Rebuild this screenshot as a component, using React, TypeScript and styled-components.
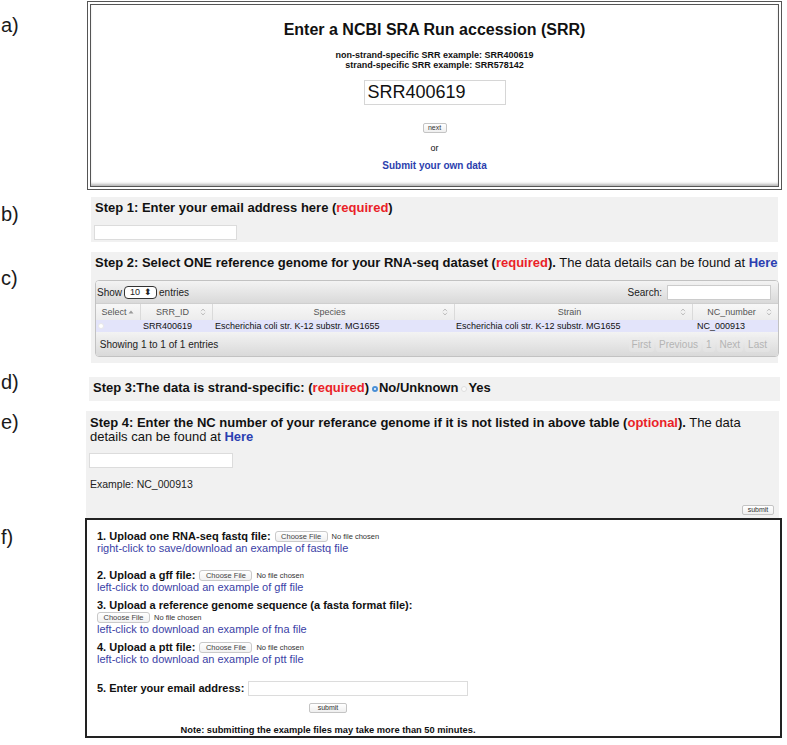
import React from "react";
import styled, { createGlobalStyle } from "styled-components";

const Global = createGlobalStyle`
  html, body { margin: 0; padding: 0; background: #fff; }
  body { font-family: "Liberation Sans", Arial, sans-serif; color: #111; }
`;

const Page = styled.div`
  width: 787px;
  padding-top: 1px;
  display: flex;
  flex-direction: column;
`;

const Row = styled.div<{ $gap: number }>`
  display: flex;
  align-items: flex-start;
  margin-top: ${(p) => p.$gap}px;
`;

const Label = styled.div<{ $top: number }>`
  width: 84px;
  flex: none;
  padding-left: 1px;
  margin-top: ${(p) => p.$top}px;
  font-size: 20px;
  line-height: 20px;
  color: #1a1a1a;
`;

/* ---------- a) ---------- */
const AccessionBox = styled.section`
  margin-left: 2px;
  width: 695px;
  height: 189px;
  box-sizing: border-box;
  border: 4px double #555;
  box-shadow: inset 0 -3px 3px -1px #b5b5b5;
  padding-top: 16px;
  display: flex;
  flex-direction: column;
  align-items: center;
  text-align: center;
`;

const Title = styled.h1`
  margin: 0;
  font-size: 16px;
  line-height: 18px;
  font-weight: bold;
`;

const Examples = styled.div`
  margin-top: 11px;
  font-size: 9px;
  line-height: 10px;
  font-weight: bold;
`;

const SrrInput = styled.input`
  margin-top: 10px;
  width: 142px;
  height: 25px;
  box-sizing: border-box;
  border: 1px solid #d6d6d6;
  padding: 0 3px;
  font-family: "Liberation Sans", Arial, sans-serif;
  font-size: 18px;
  color: #111;
  outline: none;
`;

const TinyButton = styled.button<{ $mt?: number; $w?: number }>`
  margin-top: ${(p) => p.$mt ?? 0}px;
  height: 10px;
  min-width: ${(p) => p.$w ?? 0}px;
  box-sizing: border-box;
  padding: 0 3px;
  border: 1px solid #c4c4c4;
  border-radius: 2px;
  background: linear-gradient(#ffffff, #efefef);
  font-family: "Liberation Sans", Arial, sans-serif;
  font-size: 7px;
  line-height: 8px;
  color: #333;
`;

const OrText = styled.div`
  margin-top: 10px;
  font-size: 9px;
  line-height: 10px;
`;

const SubmitOwn = styled.a`
  margin-top: 7px;
  font-size: 10px;
  line-height: 11px;
  font-weight: bold;
  color: #2c3fae;
  text-decoration: none;
`;

/* ---------- shared grey steps ---------- */
const GreyPanel = styled.section<{ $ml: number; $w: number; $h: number; $pt: number }>`
  margin-left: ${(p) => p.$ml}px;
  width: ${(p) => p.$w}px;
  height: ${(p) => p.$h}px;
  box-sizing: border-box;
  padding-top: ${(p) => p.$pt}px;
  background: #f1f1f1;
  display: flex;
  flex-direction: column;
  align-items: flex-start;
`;

const StepTitle = styled.div<{ $pl: number; $wrap?: boolean }>`
  padding-left: ${(p) => p.$pl}px;
  font-size: 13px;
  line-height: ${(p) => (p.$wrap ? 14 : 15)}px;
  font-weight: bold;
  white-space: ${(p) => (p.$wrap ? "normal" : "nowrap")};
  color: #111;
`;

const Red = styled.span`
  color: #ea1f28;
`;

const Normal = styled.span`
  font-weight: normal;
`;

const Here = styled.a`
  color: #2b3fb1;
  font-weight: bold;
  text-decoration: none;
`;

const TextField = styled.input<{ $mt: number; $ml: number; $w: number }>`
  margin: ${(p) => p.$mt}px 0 0 ${(p) => p.$ml}px;
  width: ${(p) => p.$w}px;
  height: 15px;
  box-sizing: border-box;
  border: 1px solid #dcdcdc;
  background: #fff;
  outline: none;
`;

/* ---------- c) table ---------- */
const Table = styled.div`
  margin: 10px 0 0 4px;
  width: 682px;
  border: 1px solid #c2c2c2;
  border-radius: 4px;
  overflow: hidden;
  background: #fff;
  font-size: 10px;
  color: #222;
`;

const Bar = styled.div<{ $h: number }>`
  height: ${(p) => p.$h}px;
  display: flex;
  align-items: center;
  justify-content: space-between;
  padding: 0 7px 0 1px;
  background: linear-gradient(#f3f3f3, #d9d9d9);
`;

const Inline = styled.div`
  display: flex;
  align-items: center;
  gap: 2px;
`;

const LenSelect = styled.span`
  display: inline-flex;
  align-items: center;
  justify-content: space-between;
  width: 33px;
  height: 13px;
  box-sizing: border-box;
  border: 1px solid #333;
  border-radius: 4px;
  background: #fff;
  padding: 0 4px 0 5px;
  font-size: 9px;
`;

const SearchBox = styled.input`
  width: 104px;
  height: 15px;
  box-sizing: border-box;
  border: 1px solid #ccc;
  background: #fff;
  margin-left: 3px;
  outline: none;
`;

const Cols = "45px 72px 242px 238px 1fr";

const HeadRow = styled.div`
  display: grid;
  grid-template-columns: ${Cols};
  height: 17px;
  background: linear-gradient(#f7f7f7, #ececec);
  border-top: 1px solid #cfcfcf;
  box-sizing: border-box;
`;

const HeadCell = styled.div`
  display: flex;
  align-items: center;
  padding: 0 6px 0 4px;
  border-right: 1px solid #dadada;
  color: #555;
  font-size: 9px;
  &:last-child { border-right: none; }
`;

const HeadText = styled.span`
  flex: 1;
  text-align: center;
`;

const DataRow = styled.div`
  display: grid;
  grid-template-columns: ${Cols};
  height: 12px;
  background: #e3e4fa;
  font-size: 9px;
  line-height: 12px;
  color: #111;
`;

const DataCell = styled.div<{ $pl: number }>`
  padding-left: ${(p) => p.$pl}px;
  white-space: nowrap;
  display: flex;
  align-items: center;
`;

const RowRadio = styled.span`
  width: 6px;
  height: 6px;
  border-radius: 50%;
  background: #fff;
  border: 1px solid #e8e8e8;
  box-sizing: border-box;
`;

const Pager = styled.div`
  display: flex;
  align-items: center;
  gap: 2px;
  margin-right: 1px;
`;

const PageBtn = styled.span`
  padding: 2px 3px;
  border-radius: 3px;
  background: linear-gradient(#ececec, #e2e2e2);
  color: #b4b4b4;
  font-size: 10px;
  line-height: 11px;
`;

const SortIcon = ({ active }: { active?: boolean }) =>
  active ? (
    <svg width="6" height="6" viewBox="0 0 6 6">
      <path d="M0.5 4.5 L3 1.5 L5.5 4.5 Z" fill="#9a9a9a" />
    </svg>
  ) : (
    <svg width="6" height="8" viewBox="0 0 6 8">
      <path d="M1 3.2 L3 1 L5 3.2 M1 4.8 L3 7 L5 4.8" fill="none" stroke="#b9b9b9" strokeWidth="0.9" />
    </svg>
  );

/* ---------- d) radios ---------- */
const Radio = styled.span<{ $on?: boolean }>`
  display: inline-block;
  width: 6px;
  height: 6px;
  margin: 0 1px 0 3px;
  border-radius: 50%;
  box-sizing: border-box;
  vertical-align: baseline;
  background: ${(p) => (p.$on ? "#fff" : "#fafafa")};
  border: ${(p) => (p.$on ? "2px solid #4a8fd6" : "1px solid #dedede")};
`;

/* ---------- e) ---------- */
const ExampleText = styled.div`
  margin: 10px 0 0 4px;
  font-size: 10.5px;
  line-height: 12px;
  color: #222;
`;

const RightSlot = styled.div`
  align-self: flex-end;
  margin: 8px 5px 0 0;
`;

/* ---------- f) ---------- */
const UploadBox = styled.section`
  width: 697px;
  height: 220px;
  box-sizing: border-box;
  border: 2px solid #222;
  padding: 10px 0 0 10px;
`;

const UploadInner = styled.div`
  width: 462px;
  display: flex;
  flex-direction: column;
  align-items: flex-start;
`;

const Line = styled.div<{ $mt?: number }>`
  margin-top: ${(p) => p.$mt ?? 0}px;
  height: 12px;
  display: flex;
  align-items: center;
  white-space: nowrap;
`;

const Strong = styled.span`
  font-size: 11px;
  font-weight: bold;
  color: #111;
`;

const FileLink = styled.a`
  font-size: 11px;
  line-height: 12px;
  color: #3b3fa6;
  text-decoration: none;
  white-space: nowrap;
`;

const ChooseBtn = styled.span<{ $ml?: number }>`
  margin-left: ${(p) => p.$ml ?? 4}px;
  width: 53px;
  height: 11px;
  box-sizing: border-box;
  border: 1px solid #c9c9c9;
  border-radius: 3px;
  background: linear-gradient(#ffffff, #f1f1f1);
  font-size: 7.5px;
  line-height: 9px;
  text-align: center;
  color: #444;
`;

const NoFile = styled.span`
  margin-left: 4px;
  font-size: 7.5px;
  color: #333;
`;

const Centered = styled.div<{ $mt: number }>`
  align-self: stretch;
  margin-top: ${(p) => p.$mt}px;
  display: flex;
  justify-content: center;
`;

const Note = styled.div`
  font-size: 9.3px;
  line-height: 10px;
  font-weight: bold;
  white-space: nowrap;
`;

const FileControl = ({ ml }: { ml?: number }) => (
  <>
    <ChooseBtn $ml={ml}>Choose File</ChooseBtn>
    <NoFile>No file chosen</NoFile>
  </>
);

export default function App() {
  return (
    <>
      <Global />
      <Page>
        <Row $gap={0}>
          <Label $top={14}>a)</Label>
          <AccessionBox>
            <Title>Enter a NCBI SRA Run accession (SRR)</Title>
            <Examples>
              non-strand-specific SRR example: SRR400619
              <br />
              strand-specific SRR example: SRR578142
            </Examples>
            <SrrInput defaultValue="SRR400619" readOnly />
            <TinyButton $mt={18} $w={24}>next</TinyButton>
            <OrText>or</OrText>
            <SubmitOwn href="#">Submit your own data</SubmitOwn>
          </AccessionBox>
        </Row>

        <Row $gap={7}>
          <Label $top={7}>b)</Label>
          <GreyPanel $ml={6} $w={687} $h={45} $pt={3}>
            <StepTitle $pl={4}>
              Step 1: Enter your email address here (<Red>required</Red>)
            </StepTitle>
            <TextField $mt={10} $ml={3} $w={143} />
          </GreyPanel>
        </Row>

        <Row $gap={10}>
          <Label $top={16}>c)</Label>
          <GreyPanel $ml={6} $w={687} $h={111} $pt={3}>
            <StepTitle $pl={4}>
              Step 2: Select ONE reference genome for your RNA-seq dataset (<Red>required</Red>).
              <Normal> The data details can be found at </Normal>
              <Here href="#">Here</Here>
            </StepTitle>
            <Table>
              <Bar $h={22}>
                <Inline>
                  <span>Show</span>
                  <LenSelect>
                    <span>10</span>
                    <span>⬍</span>
                  </LenSelect>
                  <span>entries</span>
                </Inline>
                <Inline>
                  <span>Search:</span>
                  <SearchBox />
                </Inline>
              </Bar>
              <HeadRow>
                <HeadCell>
                  <HeadText>Select</HeadText>
                  <SortIcon active />
                </HeadCell>
                <HeadCell>
                  <HeadText>SRR_ID</HeadText>
                  <SortIcon />
                </HeadCell>
                <HeadCell>
                  <HeadText>Species</HeadText>
                  <SortIcon />
                </HeadCell>
                <HeadCell>
                  <HeadText>Strain</HeadText>
                  <SortIcon />
                </HeadCell>
                <HeadCell>
                  <HeadText>NC_number</HeadText>
                  <SortIcon />
                </HeadCell>
              </HeadRow>
              <DataRow>
                <DataCell $pl={2}>
                  <RowRadio />
                </DataCell>
                <DataCell $pl={2}>SRR400619</DataCell>
                <DataCell $pl={2}>Escherichia coli str. K-12 substr. MG1655</DataCell>
                <DataCell $pl={1}>Escherichia coli str. K-12 substr. MG1655</DataCell>
                <DataCell $pl={4}>NC_000913</DataCell>
              </DataRow>
              <Bar $h={24}>
                <span>&nbsp;Showing 1 to 1 of 1 entries</span>
                <Pager>
                  <PageBtn>First</PageBtn>
                  <PageBtn>Previous</PageBtn>
                  <PageBtn>1</PageBtn>
                  <PageBtn>Next</PageBtn>
                  <PageBtn>Last</PageBtn>
                </Pager>
              </Bar>
            </Table>
          </GreyPanel>
        </Row>

        <Row $gap={14}>
          <Label $top={-5}>d)</Label>
          <GreyPanel $ml={4} $w={691} $h={24} $pt={3}>
            <StepTitle $pl={4}>
              Step 3:The data is strand-specific: (<Red>required</Red>)
              <Radio $on />
              No/Unknown
              <Radio />
              Yes
            </StepTitle>
          </GreyPanel>
        </Row>

        <Row $gap={10}>
          <Label $top={1}>e)</Label>
          <GreyPanel $ml={1} $w={693} $h={107} $pt={5}>
            <StepTitle $pl={4} $wrap>
              Step 4: Enter the NC number of your referance genome if it is not listed in above table (
              <Red>optional</Red>).<Normal> The data details can be found at </Normal>
              <Here href="#">Here</Here>
            </StepTitle>
            <TextField $mt={9} $ml={3} $w={144} />
            <ExampleText>Example: NC_000913</ExampleText>
            <RightSlot>
              <TinyButton $w={32}>submit</TinyButton>
            </RightSlot>
          </GreyPanel>
        </Row>

        <Row $gap={0}>
          <Label $top={9}>f)</Label>
          <UploadBox>
            <UploadInner>
              <Line>
                <Strong>1. Upload one RNA-seq fastq file:</Strong>
                <FileControl />
              </Line>
              <FileLink href="#">right-click to save/download an example of fastq file</FileLink>

              <Line $mt={15}>
                <Strong>2. Upload a gff file:</Strong>
                <FileControl />
              </Line>
              <FileLink href="#">left-click to download an example of gff file</FileLink>

              <Line $mt={6}>
                <Strong>3. Upload a reference genome sequence (a fasta format file):</Strong>
              </Line>
              <Line>
                <FileControl ml={0} />
              </Line>
              <FileLink href="#">left-click to download an example of fna file</FileLink>

              <Line $mt={6}>
                <Strong>4. Upload a ptt file:</Strong>
                <FileControl />
              </Line>
              <FileLink href="#">left-click to download an example of ptt file</FileLink>

              <Line $mt={17}>
                <Strong>5. Enter your email address:</Strong>
                <TextField $mt={0} $ml={4} $w={220} />
              </Line>

              <Centered $mt={9}>
                <TinyButton $w={38}>submit</TinyButton>
              </Centered>
              <Centered $mt={12}>
                <Note>Note: submitting the example files may take more than 50 minutes.</Note>
              </Centered>
            </UploadInner>
          </UploadBox>
        </Row>
      </Page>
    </>
  );
}
